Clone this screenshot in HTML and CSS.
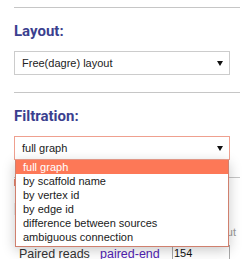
FILE: index.html
```html
<!DOCTYPE html>
<html lang="en">

<head>
  <meta charset="UTF-8">
  <meta name="viewport" content="width=device-width, initial-scale=1.0">
  <title>Graph settings</title>
  <link rel="stylesheet" href="styles.css">
</head>

<body>
  <div class="panel">
    <section class="block">
      <h3>Layout:</h3>
      <div class="select">
        <span>Free(dagre) layout</span>
        <svg class="caret" width="6" height="5" viewBox="0 0 6 5"><path d="M0 0h6L3 5z"/></svg>
      </div>
    </section>

    <section class="block">
      <h3>Filtration:</h3>
      <div class="select-wrap">
        <div class="select focused">
          <span>full graph</span>
          <svg class="caret" width="6" height="5" viewBox="0 0 6 5"><path d="M0 0h6L3 5z"/></svg>
        </div>
        <ul class="dropdown">
          <li class="active">full graph</li>
          <li>by scaffold name</li>
          <li>by vertex id</li>
          <li>by edge id</li>
          <li>difference between sources</li>
          <li>ambiguous connection</li>
        </ul>
      </div>
    </section>

    <section class="block stats">
      <div class="tab"></div>
      <div class="bar"></div>
      <div class="head">Input</div>
      <div class="row">
        <span class="name">Paired reads</span>
        <a href="#" class="link">paired-end</a>
        <span class="value">154</span>
      </div>
    </section>
  </div>
</body>

</html>
```

FILE: styles.css
```css
body {
  font-family: "Liberation Sans", Arial, sans-serif;
  margin: 0;
  background: #fff;
  overflow: hidden;
}

.panel {
  width: 226px;
  margin-top: 7px;
  padding-left: 14px;
}

.block {
  border-top: 1px solid #c6c6c6;
  padding: 14px 0 17px;
}

h3 {
  margin: 0 0 11px;
  font: 700 15px/18px Roboto, sans-serif;
  color: #3b3f8f;
}

.select-wrap {
  position: relative;
  width: 216px;
}

.select {
  width: 216px;
  height: 24px;
  box-sizing: border-box;
  border: 1px solid #ccc;
  padding: 0 6px 0 7px;
  display: flex;
  align-items: center;
  justify-content: space-between;
  font-size: 11px;
  color: #222;
  background: #fff;
}

.select.focused {
  border-color: #efa08f;
}

.caret {
  fill: #111;
}

.dropdown {
  position: absolute;
  top: 100%;
  left: 1px;
  width: 214px;
  box-sizing: border-box;
  margin: 0;
  padding: 0 0 2px;
  list-style: none;
  background: #fff;
  border: 1px solid #d0806e;
  border-top: 0;
  box-shadow: 0 3px 12px rgba(0, 0, 0, 0.22);
  z-index: 2;
}

.dropdown li {
  height: 14px;
  line-height: 14px;
  padding-left: 7px;
  font-size: 11px;
  color: #1a1a1a;
}

.dropdown li.active {
  background: #fd7857;
  color: #fff;
}

.stats {
  padding-top: 0;
}

.tab {
  width: 8px;
  height: 7px;
  margin-top: 1px;
  background: #e8866e;
}

.bar {
  width: 200px;
  height: 12px;
  margin-top: 17px;
  background: #ececec;
}

.head {
  margin-top: 11px;
  padding-right: 4px;
  text-align: right;
  font-size: 11px;
  line-height: 13px;
  color: #999;
}

.row {
  display: grid;
  grid-template-columns: 86px 72px 58px;
  height: 20px;
  margin-top: 6px;
}

.name {
  padding: 1px 0 0 5px;
  font-size: 12.5px;
  line-height: 16px;
  color: #333;
}

.link {
  padding-top: 1px;
  font-size: 12.5px;
  line-height: 16px;
  color: #5222b4;
  text-decoration: none;
}

.value {
  box-sizing: border-box;
  border: 1px solid #a9a9a9;
  padding: 1px 0 0 1px;
  font-size: 11px;
  line-height: 13px;
  color: #111;
}
```
